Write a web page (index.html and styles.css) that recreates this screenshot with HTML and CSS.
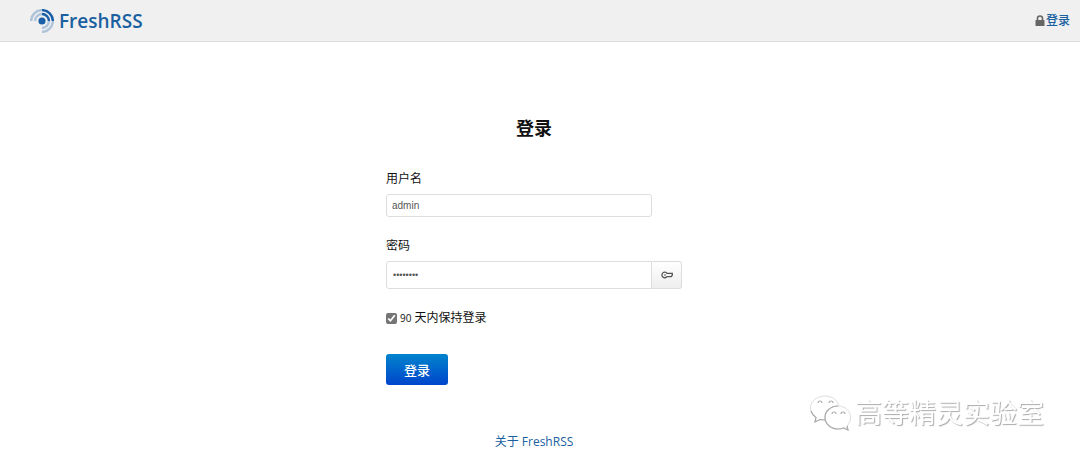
FILE: index.html
```html
<!DOCTYPE html>
<html lang="zh-CN">
<head>
    <meta charset="UTF-8">
    <meta name="viewport" content="width=device-width, initial-scale=1.0">
    <title>登录 · FreshRSS</title>
    <link rel="stylesheet" href="styles.css">
</head>
<body>

<header class="header">
    <a class="brand" href="#">
        <svg class="logo" viewBox="0 0 256 256" aria-hidden="true">
            <circle cx="128" cy="128" r="38" fill="#1a5fa8"/>
            <g fill="none" stroke="#1a5fa8" stroke-width="26">
                <g stroke-opacity="0.3">
                    <path d="M12 128A116 116 0 0 1 128 12"/>
                    <path d="M244 128A116 116 0 0 1 128 244"/>
                    <path d="M54 128A74 74 0 0 1 128 54"/>
                    <path d="M202 128A74 74 0 0 1 128 202"/>
                </g>
                <path d="M128 12A116 116 0 0 1 244 128"/>
                <path d="M128 54A74 74 0 0 1 202 128"/>
            </g>
        </svg>
        <span>FreshRSS</span>
    </a>
    <a class="signin" href="#">
        <svg class="lock" viewBox="0 0 10 12" aria-hidden="true">
            <path d="M2.5 6V3.5a2.5 2.5 0 0 1 5 0V6" fill="none" stroke="#666" stroke-width="1.6"/>
            <rect x="0.5" y="5" width="9" height="6" rx="0.5" fill="#666"/>
        </svg>
        <span>登录</span>
    </a>
</header>

<main class="prompt">
    <h1>登录</h1>
    <form class="form">
        <div class="form-group">
            <label for="username">用户名</label>
            <input type="text" id="username" value="admin">
        </div>
        <div class="form-group">
            <label for="password">密码</label>
            <div class="stick">
                <input type="password" id="password" value="password">
                <button type="button" class="toggle" aria-label="显示密码">
                    <svg class="key" viewBox="0 0 12 8" aria-hidden="true">
                        <path d="M6 2.3H11.3V4.2L10.2 5.6H6A2.8 2.8 0 1 1 6 2.3Z" fill="none" stroke="#555" stroke-width="1.3"/>
                        <path d="M3 4H5" stroke="#555" stroke-width="1"/>
                    </svg>
                </button>
            </div>
        </div>
        <label class="keep" for="keep">
            <input type="checkbox" id="keep" checked>
            <span><small>90</small> 天内保持登录</span>
        </label>
        <button type="submit" class="btn">登录</button>
    </form>
    <a class="about" href="#">关于 FreshRSS</a>
</main>

<div class="watermark">
    <svg class="wechat" viewBox="0 0 44 38" aria-hidden="true">
        <g fill="#fff" stroke="#ddd" stroke-width="1">
            <path d="M18 2C10 2 3.5 7 3.5 14C3.5 18 5.5 21 9 23.5L8 28L13 25.5C15 26 17 26 19 26C27 26 32 21 32 14C32 7 26 2 18 2Z"/>
            <path d="M31 12C24 12 18 17 18 23.5C18 30 24 35 31 35C33 35 35 34.5 36.5 34L41 36L40 32C42 30 43.5 27 43.5 23.5C43.5 17 38 12 31 12Z"/>
        </g>
        <g fill="none" stroke="#aaa" stroke-width="1.2">
            <path d="M4 17C5 20 6.5 22 9 23.5L8 28L13 25.5L18 26"/>
            <path d="M31 12C24 12 18 17 18 23.5C18 30 24 35 31 35C33 35 35 34.5 36.5 34L41 36L40 32"/>
            <path d="M11 9a2 2 0 0 1 4 0M22 9a2 2 0 0 1 4 0M25 20a2 2 0 0 1 4 0M34 20a2 2 0 0 1 4 0"/>
        </g>
    </svg>
    <span>高等精灵实验室</span>
</div>

</body>
</html>
```

FILE: styles.css
```css
* {
    box-sizing: border-box;
}

body {
    margin: 0;
    background-color: #fff;
    color: #111;
    font-family: "Open Sans", "Noto Sans CJK SC", sans-serif;
    font-size: 12px;
    line-height: 18px;
}

a {
    color: #1a5fa0;
    text-decoration: none;
}

.header {
    display: flex;
    align-items: center;
    justify-content: space-between;
    height: 42px;
    padding: 0 10px 0 30px;
    background-color: #f0f0f0;
    border-bottom: 1px solid #ddd;
}

.brand {
    display: flex;
    align-items: center;
    gap: 5px;
    font-size: 19px;
    font-weight: 600;
    line-height: 24px;
}

.logo {
    width: 24px;
    height: 24px;
}

.signin {
    display: flex;
    align-items: center;
    gap: 1px;
    font-weight: 500;
}

.lock {
    width: 10px;
    height: 12px;
}

.prompt {
    display: flex;
    flex-direction: column;
    align-items: center;
    padding: 72px 12px 0 0;
}

h1 {
    margin: 0 0 28px;
    font-size: 18px;
    line-height: 28px;
}

.form {
    display: flex;
    flex-direction: column;
    align-items: flex-start;
    width: 296px;
}

.form-group {
    display: flex;
    flex-direction: column;
    gap: 6px;
    width: 100%;
    margin-bottom: 20px;
}

input[type="text"],
input[type="password"] {
    width: 266px;
    height: 23px;
    padding: 0 5px;
    border: 1px solid #ddd;
    border-radius: 3px;
    background-color: #fff;
    color: #555;
    font-family: "Liberation Sans", Arial, sans-serif;
    font-size: 10px;
}

.stick {
    display: flex;
}

.stick input[type="password"] {
    height: 28px;
    padding: 0 6px;
    border-radius: 3px 0 0 3px;
    font-size: 9px;
}

.toggle {
    display: flex;
    align-items: center;
    justify-content: center;
    width: 30px;
    height: 28px;
    padding: 0;
    border: 1px solid #ddd;
    border-left: 0;
    border-radius: 0 3px 3px 0;
    background: linear-gradient(#fff, #eee);
}

.key {
    width: 12px;
    height: 8px;
}

.keep {
    display: flex;
    align-items: center;
    gap: 3px;
    margin-bottom: 27px;
}

.keep input {
    width: 11px;
    height: 11px;
    margin: 0;
    accent-color: #757575;
}

.keep small {
    font-size: 10px;
}

.btn {
    height: 31px;
    padding: 0 18px;
    border: 0;
    border-radius: 3px;
    background: linear-gradient(#0084cc, #0045cc);
    color: #fff;
    font-family: inherit;
    font-size: 13px;
    font-weight: 500;
}

.about {
    margin-top: 48px;
}

.watermark {
    position: fixed;
    right: 36px;
    bottom: 29px;
    display: flex;
    align-items: center;
    gap: 4px;
    color: #fff;
    font-size: 27px;
    line-height: 38px;
    text-shadow: 1px 1px 1px #aaa;
}

.wechat {
    width: 44px;
    height: 38px;
}
```
